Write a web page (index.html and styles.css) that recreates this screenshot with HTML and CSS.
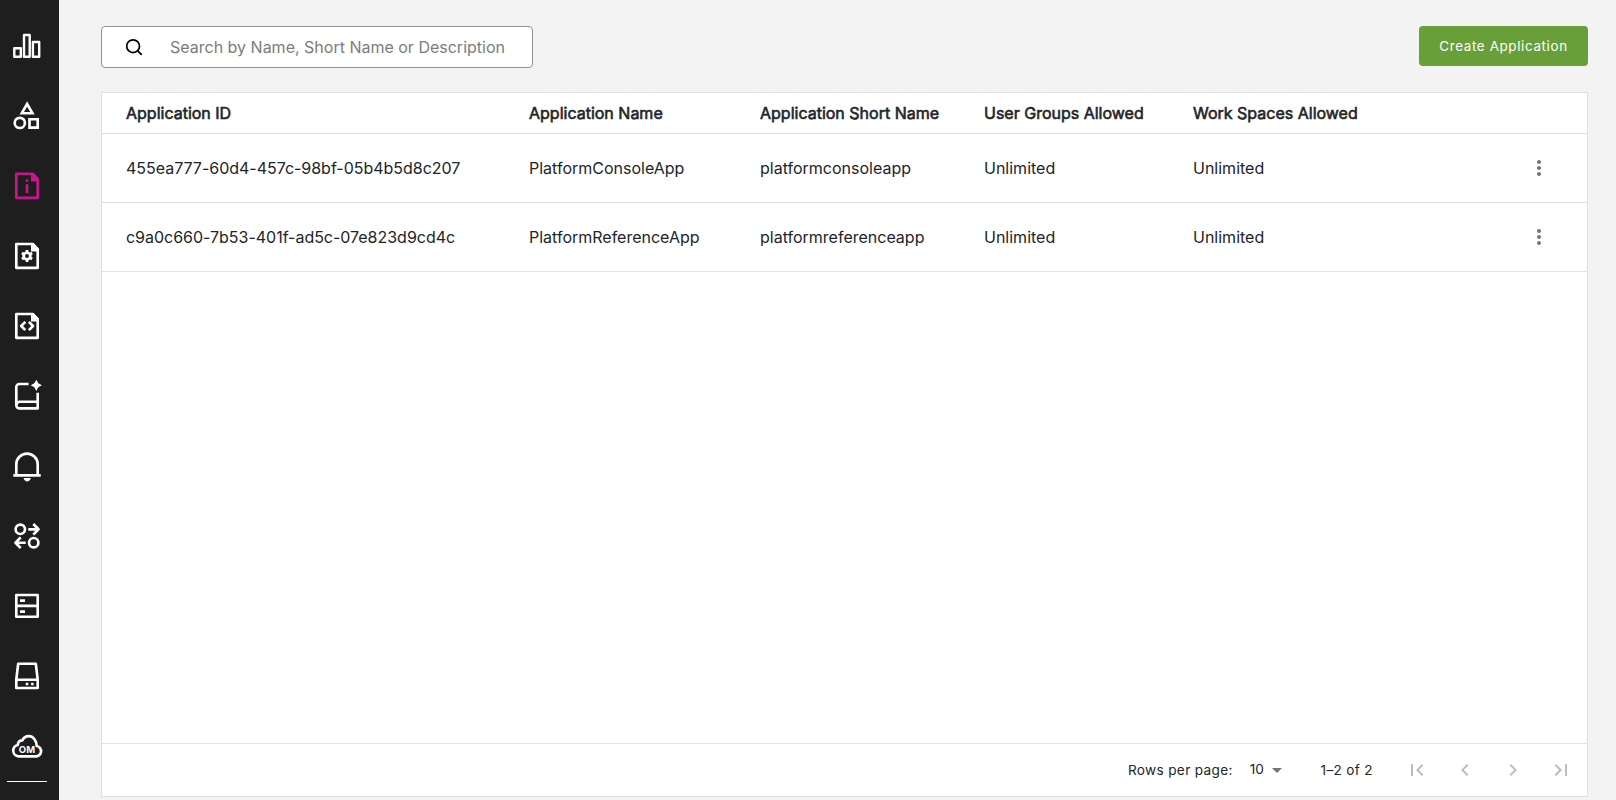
FILE: index.html
```html
<!DOCTYPE html>
<html lang="en">
<head>
<meta charset="utf-8">
<title>Applications</title>
<link rel="stylesheet" href="styles.css">
</head>
<body>
<div class="app">
  <nav class="sidebar">
    <a class="nav-item"><svg viewBox="0 0 36 36"><path stroke-width="2.400" d="M5.300 20.200h6.500v8.600H5.300zM15 7h5.700v21.800H15zM23.900 14h6.300v14.800h-6.300z"/></svg></a>
    <a class="nav-item"><svg viewBox="0 0 36 36"><path stroke-linejoin="miter" d="M18.100 6l5.300 9.200H12.800z"/><circle cx="10.800" cy="24.900" r="5.100"/><path stroke-linejoin="miter" d="M20.500 21.200h8.200v8.400h-8.200z"/></svg></a>
    <a class="nav-item active"><svg viewBox="0 0 36 36"><path d="M7.300 5.700H23.600L28.700 11V29.800H7.300z"/><path class="solid" d="M22 5h2.500l5.500 6v2.500h-8z"/><path class="solid" d="M16.700 11.200h2.600v2.500h-2.600zM16.700 16.300h2.600v8.600h-2.600z"/></svg></a>
    <a class="nav-item"><svg viewBox="0 0 36 36"><path d="M7.300 6H23.600L28.700 11.200V29.800H7.300z"/><path class="solid" d="M22 5h2.500l5.500 6v2.500h-8z"/><circle cx="18" cy="18" r="3.300"/><path stroke-width="2.800" d="M18 12v2.400M18 21.600v2.400M12.900 15l2 1.200M21.100 19.800l2 1.200M12.900 21l2-1.200M21.100 16.200l2-1.200"/></svg></a>
    <a class="nav-item"><svg viewBox="0 0 36 36"><path d="M7.300 6H23.600L28.700 11.200V29.800H7.300z"/><path class="solid" d="M22 5h2.500l5.500 6v2.500h-8z"/><path d="M16.300 13.900L12.200 18l4.100 4.100M19.900 13.900l4.100 4.100-4.100 4.100"/></svg></a>
    <a class="nav-item"><svg viewBox="0 0 36 36"><path d="M19.600 6H10.300a3 3 0 0 0-3 3V27.200a3.200 3.200 0 0 0 3.200 3.200H28.700V14.800M7.300 27.200a3.600 3.600 0 0 1 3.200-3.500H28.700"/><path class="solid" d="M27.300 1.700l2 3.600 3.600 2-3.600 2-2 3.600-2-3.600-3.600-2 3.600-2z"/></svg></a>
    <a class="nav-item"><svg viewBox="0 0 36 36"><path d="M7.300 27V16.300a10.700 10.700 0 0 1 21.400 0V27M4.300 27.300h27.400"/><path class="solid" d="M14.600 30h7.200c-.5 2.200-1.900 3.400-3.600 3.400S15.100 32.200 14.600 30z"/></svg></a>
    <a class="nav-item"><svg viewBox="0 0 36 36"><circle cx="11.300" cy="11.300" r="4.700"/><circle cx="24.700" cy="24.700" r="4.700"/><path d="M19.300 11.300H29.300M24.300 6l5.200 5.300-5.200 5.300M16.700 24.700H6.700M11.700 19.400L6.500 24.700l5.200 5.300"/></svg></a>
    <a class="nav-item"><svg viewBox="0 0 36 36"><path d="M7.300 7H28.700V28.700H7.300zM7.300 17.800H28.700"/><path class="solid" d="M11 11.200h5v2.800h-5zM11 22.200h5v2.800h-5z"/></svg></a>
    <a class="nav-item"><svg viewBox="0 0 36 36"><path d="M9.200 5.700H26.800L28.700 21.500V30H7.300V21.500zM7.300 21.700H28.700"/><path class="solid" d="M16.800 24.700h2.500v2.500h-2.500zM22.100 24.700h2.500v2.500h-2.500z"/></svg></a>
    <a class="nav-item"><svg viewBox="0 0 36 36"><path d="M9.700 28.300h16.300a5.200 5.200 0 0 0 1.700-10.300c-.3-5.500-3.500-9.900-7.800-9.900-3.100 0-5.300 1.500-6.600 4.300-2.400-.2-4.500 1.600-4.500 4.600-2.900.7-4.600 2.900-4.600 5.600 0 3.200 2.400 5.700 5.500 5.700z"/><text class="om" x="18.100" y="25.200" text-anchor="middle">OM</text></svg></a>
    <div class="nav-divider"></div>
  </nav>
  <main class="content">
    <div class="toolbar">
      <label class="search">
        <svg viewBox="0 0 18 18"><circle cx="7.100" cy="8.200" r="6.400"/><path d="M11.700 12.800l4 4"/></svg>
        <input type="text" placeholder="Search by Name, Short Name or Description">
      </label>
      <button class="create">Create Application</button>
    </div>
    <section class="panel">
      <table class="grid">
        <colgroup><col class="c-id"><col class="c-name"><col class="c-short"><col class="c-groups"><col class="c-spaces"><col class="c-menu"></colgroup>
        <thead><tr><th>Application ID</th><th>Application Name</th><th>Application Short Name</th><th>User Groups Allowed</th><th>Work Spaces Allowed</th><th></th></tr></thead>
        <tbody>
          <tr><td class="app-id">455ea777-60d4-457c-98bf-05b4b5d8c207</td><td>PlatformConsoleApp</td><td>platformconsoleapp</td><td>Unlimited</td><td>Unlimited</td><td class="menu"><svg viewBox="0 0 24 24"><path d="M12 8c1.100 0 2-.9 2-2s-.9-2-2-2-2 .9-2 2 .9 2 2 2zm0 2c-1.100 0-2 .9-2 2s.9 2 2 2 2-.9 2-2-.9-2-2-2zm0 6c-1.100 0-2 .9-2 2s.9 2 2 2 2-.9 2-2-.9-2-2-2z"/></svg></td></tr>
          <tr><td class="app-id">c9a0c660-7b53-401f-ad5c-07e823d9cd4c</td><td>PlatformReferenceApp</td><td>platformreferenceapp</td><td>Unlimited</td><td>Unlimited</td><td class="menu"><svg viewBox="0 0 24 24"><path d="M12 8c1.100 0 2-.9 2-2s-.9-2-2-2-2 .9-2 2 .9 2 2 2zm0 2c-1.100 0-2 .9-2 2s.9 2 2 2 2-.9 2-2-.9-2-2-2zm0 6c-1.100 0-2 .9-2 2s.9 2 2 2 2-.9 2-2-.9-2-2-2z"/></svg></td></tr>
        </tbody>
      </table>
      <footer class="pager">
        <span class="rows-label">Rows per page:</span>
        <span class="rows-value">10</span>
        <svg class="caret" viewBox="0 0 24 24"><path d="M7 10l5 5 5-5z"/></svg>
        <span class="range">1–2 of 2</span>
        <div class="pages">
          <svg viewBox="0 0 24 24"><path d="M18.410 16.590L13.820 12l4.590-4.590L17 6l-6 6 6 6zM6 6h2v12H6z"/></svg>
          <svg viewBox="0 0 24 24"><path d="M15.410 7.410L14 6l-6 6 6 6 1.410-1.410L10.830 12z"/></svg>
          <svg viewBox="0 0 24 24"><path d="M10 6L8.590 7.410 13.170 12l-4.580 4.590L10 18l6-6z"/></svg>
          <svg viewBox="0 0 24 24"><path d="M5.590 7.410L10.180 12l-4.590 4.590L7 18l6-6-6-6zM16 6h2v12h-2z"/></svg>
        </div>
      </footer>
    </section>
  </main>
</div>
</body>
</html>
```

FILE: styles.css
```css
* { box-sizing: border-box; }

body {
  margin: 0;
  background: #f3f3f3;
  color: #212529;
  font-family: Inter, "Liberation Sans", sans-serif;
  font-size: 16px;
}

.app { display: flex; height: 800px; overflow: hidden; }

.sidebar {
  flex: none;
  width: 59px;
  padding: 11px 5px 0 0;
  background: #1e1e1e;
  display: flex;
  flex-direction: column;
  align-items: center;
}

.nav-item {
  flex: none;
  height: 70px;
  display: flex;
  align-items: center;
  color: #fff;
}

.nav-item.active { color: #c6168d; }

.nav-item svg {
  width: 36px;
  height: 36px;
  fill: none;
  stroke: currentColor;
  stroke-width: 2.65;
  stroke-linejoin: round;
}

.nav-item .solid { fill: currentColor; stroke: none; }

.nav-item .om {
  fill: currentColor;
  stroke: none;
  font-size: 9.5px;
  font-weight: 700;
  letter-spacing: 0.3px;
}

.nav-divider { flex: none; width: 40px; height: 1px; background: #fff; }

.content {
  flex: 1;
  min-width: 0;
  padding: 26px 28px 3px 42px;
  display: flex;
  flex-direction: column;
  gap: 24px;
}

.toolbar { display: flex; justify-content: space-between; align-items: flex-start; }

.search {
  width: 432px;
  height: 42px;
  padding: 0 24px;
  display: flex;
  align-items: center;
  gap: 26px;
  background: #fff;
  border: 1px solid #919191;
  border-radius: 4px;
}

.search svg { flex: none; width: 18px; height: 18px; fill: none; stroke: #000; stroke-width: 1.7; }

.search input {
  flex: 1;
  min-width: 0;
  padding: 0;
  border: 0;
  outline: 0;
  background: transparent;
  font: inherit;
}

.search input::placeholder { color: #7c7c7c; opacity: 1; }

.create {
  width: 169px;
  height: 40px;
  padding: 0;
  border: 0;
  border-radius: 4px;
  background: #689f38;
  color: #fff;
  font: 400 13.4px Inter, "Liberation Sans", sans-serif;
  letter-spacing: 0.64px;
}

.panel {
  flex: 1;
  display: flex;
  flex-direction: column;
  justify-content: space-between;
  background: #fff;
  border: 1px solid #e0e0e0;
}

.grid { width: 100%; table-layout: fixed; border-collapse: separate; border-spacing: 0; }
.c-id { width: 403px; }
.c-name { width: 231px; }
.c-short { width: 224px; }
.c-groups { width: 209px; }
.c-spaces { width: 300px; }

.grid th,
.grid td {
  padding: 0 0 0 24px;
  text-align: left;
  white-space: nowrap;
  border-bottom: 1px solid #e0e0e0;
}

.grid th { height: 41px; font-weight: 400; -webkit-text-stroke: 0.6px #212529; }
.grid td { height: 69px; }
.grid .app-id { letter-spacing: -0.02px; }

.grid .menu { text-align: right; padding-right: 36px; }
.menu svg { display: inline-block; vertical-align: middle; width: 24px; height: 24px; fill: #757575; }

.pager {
  height: 53px;
  padding-right: 14px;
  border-top: 1px solid #e0e0e0;
  display: flex;
  align-items: center;
  justify-content: flex-end;
  font-size: 13.6px;
  letter-spacing: 0.34px;
}

.rows-value { margin-left: 17px; padding-bottom: 2px; letter-spacing: 0.1px; }
.caret { width: 24px; height: 24px; margin-left: 1px; fill: #757575; }
.range { margin-left: 31.500px; }
.pages { display: flex; gap: 24px; margin-left: 32px; }
.pages svg { width: 24px; height: 24px; fill: #bdbdbd; }
```
